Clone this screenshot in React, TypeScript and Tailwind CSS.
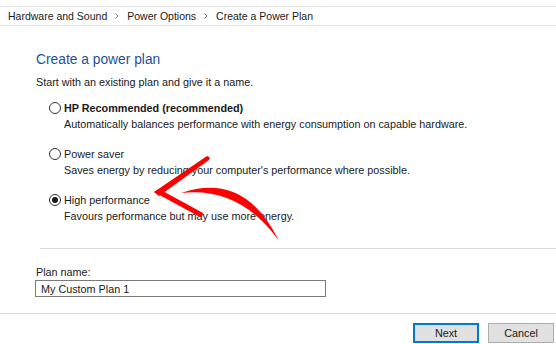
import React from 'react'

const plans = [
  { name: 'HP Recommended (recommended)', desc: 'Automatically balances performance with energy consumption on capable hardware.', bold: true, checked: false },
  { name: 'Power saver', desc: "Saves energy by reducing your computer's performance where possible.", bold: false, checked: false },
  { name: 'High performance', desc: 'Favours performance but may use more energy.', bold: false, checked: true },
]

function Radio({ checked }: { checked: boolean }) {
  return (
    <span className="flex h-[12px] w-[12px] shrink-0 items-center justify-center rounded-full border border-[#333333] bg-white">
      {checked && <span className="h-[6px] w-[6px] rounded-full bg-[#1a1a1a]" />}
    </span>
  )
}

function Chevron() {
  return (
    <svg width="8" height="8" viewBox="0 0 8 8" className="mx-[6px]">
      <path d="M2.5 1.5 L5 4 L2.5 6.5" fill="none" stroke="#8a8a8a" strokeWidth="1" />
    </svg>
  )
}

export default function App() {
  return (
    <div className="relative h-[344px] w-[556px] overflow-hidden bg-white text-[10.8px] leading-[16px] text-[#1a1a1a] [font-family:'Liberation_Sans',Arial,sans-serif]">
      {/* breadcrumb */}
      <div className="mt-[6px] flex h-[20px] items-center border-y border-[#e3e3e3] pl-[8px] text-[10.5px] text-[#1a1a1a]">
        <span>Hardware and Sound</span>
        <Chevron />
        <span>Power Options</span>
        <Chevron />
        <span>Create a Power Plan</span>
      </div>

      <div className="pl-[36px] pt-[24px]">
        <h1 className="text-[13.8px] leading-[20px] text-[#1e4f9c]">Create a power plan</h1>
        <p className="mt-[4px]">Start with an existing plan and give it a name.</p>

        <div className="mt-[10px] flex flex-col gap-[14px] pl-[13px]">
          {plans.map((p) => (
            <div key={p.name}>
              <div className="flex items-center gap-[3px]">
                <Radio checked={p.checked} />
                <span className={p.bold ? 'font-bold' : ''}>{p.name}</span>
              </div>
              <div className="pl-[15px]">{p.desc}</div>
            </div>
          ))}
        </div>

        <div className="ml-[4px] mt-[24px] border-t border-[#dcdcdc]" />

        <div className="mt-[15px]">Plan name:</div>
        <div className="-ml-px flex h-[17px] w-[291px] items-center border border-[#7a7a7a] pl-[5px]">
          My Custom Plan 1
        </div>
      </div>

      <div className="mt-[16px] border-t border-[#dcdcdc]" />

      <div className="flex justify-end gap-[9px] pr-[2px] pt-[9px]">
        <button className="h-[20px] w-[66px] border-2 border-[#0078d7] bg-[#e1e1e1] text-[10.8px] leading-none">Next</button>
        <button className="h-[20px] w-[66px] border border-[#adadad] bg-[#e1e1e1] text-[10.8px] leading-none">Cancel</button>
      </div>

      {/* red arrow annotation */}
      <svg className="pointer-events-none absolute inset-0" width="556" height="344" viewBox="0 0 556 344">
        <path d="M154 192 L207 156 Q211 157 209 160 L159 196 Z" fill="#f00" />
        <path d="M154 192 L159 189 L203 213 Q203 217 200 217 Z" fill="#f00" />
        <path d="M181 193 Q245 171 279 241 Q240 186 181 193 Z" fill="#f00" />
      </svg>
    </div>
  )
}
